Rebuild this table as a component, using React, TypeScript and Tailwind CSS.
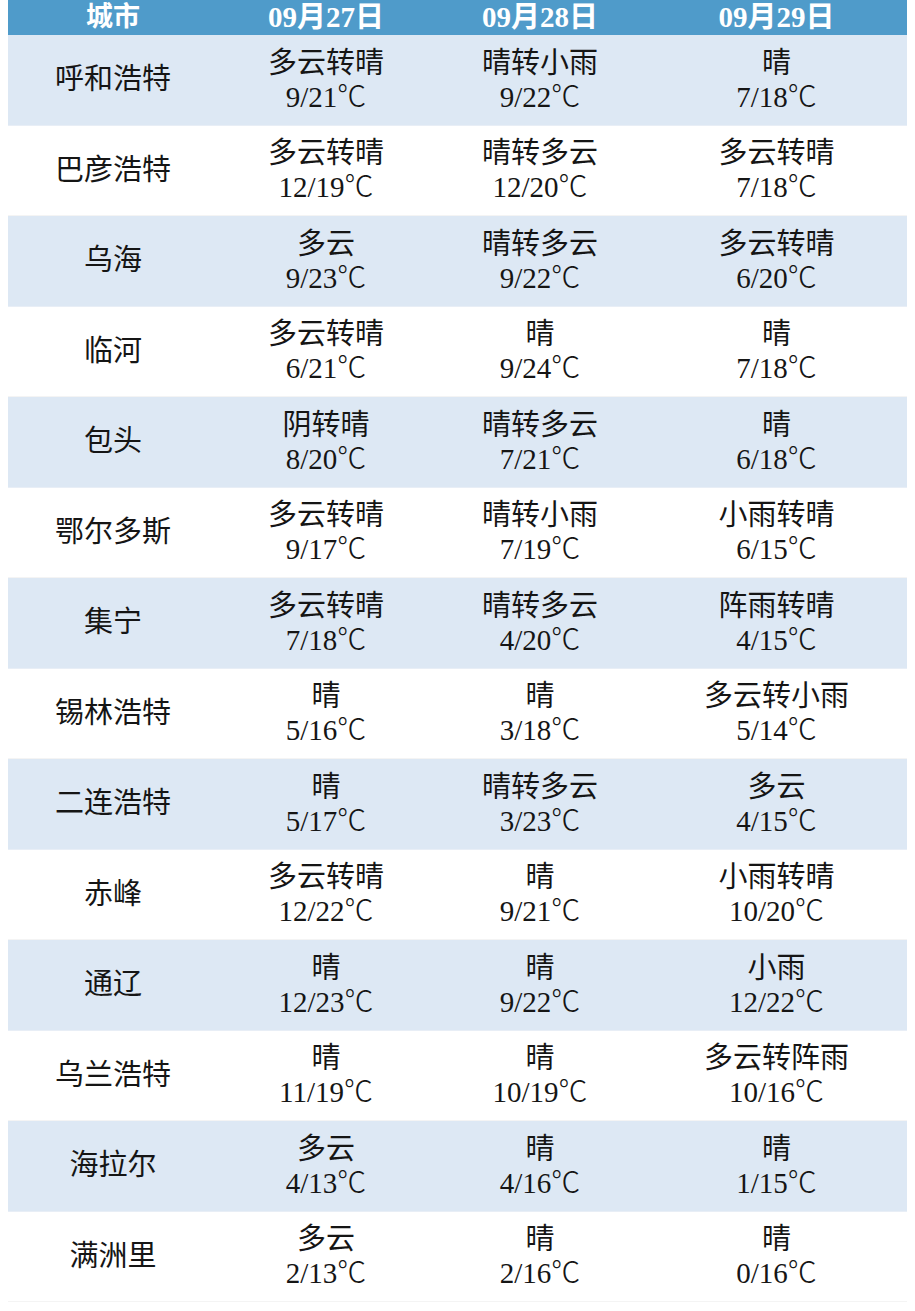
const days = ['09月27日', '09月28日', '09月29日']

type Cell = [string, string]
type Row = { city: string; cells: Cell[] }

const rows: Row[] = [
  { city: '呼和浩特', cells: [['多云转晴', '9/21'], ['晴转小雨', '9/22'], ['晴', '7/18']] },
  { city: '巴彦浩特', cells: [['多云转晴', '12/19'], ['晴转多云', '12/20'], ['多云转晴', '7/18']] },
  { city: '乌海', cells: [['多云', '9/23'], ['晴转多云', '9/22'], ['多云转晴', '6/20']] },
  { city: '临河', cells: [['多云转晴', '6/21'], ['晴', '9/24'], ['晴', '7/18']] },
  { city: '包头', cells: [['阴转晴', '8/20'], ['晴转多云', '7/21'], ['晴', '6/18']] },
  { city: '鄂尔多斯', cells: [['多云转晴', '9/17'], ['晴转小雨', '7/19'], ['小雨转晴', '6/15']] },
  { city: '集宁', cells: [['多云转晴', '7/18'], ['晴转多云', '4/20'], ['阵雨转晴', '4/15']] },
  { city: '锡林浩特', cells: [['晴', '5/16'], ['晴', '3/18'], ['多云转小雨', '5/14']] },
  { city: '二连浩特', cells: [['晴', '5/17'], ['晴转多云', '3/23'], ['多云', '4/15']] },
  { city: '赤峰', cells: [['多云转晴', '12/22'], ['晴', '9/21'], ['小雨转晴', '10/20']] },
  { city: '通辽', cells: [['晴', '12/23'], ['晴', '9/22'], ['小雨', '12/22']] },
  { city: '乌兰浩特', cells: [['晴', '11/19'], ['晴', '10/19'], ['多云转阵雨', '10/16']] },
  { city: '海拉尔', cells: [['多云', '4/13'], ['晴', '4/16'], ['晴', '1/15']] },
  { city: '满洲里', cells: [['多云', '2/13'], ['晴', '2/16'], ['晴', '0/16']] },
]

// column widths measured off the screenshot
const widths = ['w-[210px]', 'w-[216px]', 'w-[212px]', 'w-[261px]']

const serif = "font-['Liberation_Serif','Noto_Sans_CJK_SC',serif]"

export default function App() {
  return (
    <div className="min-h-[1311px] w-[915px] bg-white">
      <div className={`ml-[8px] w-[899px] ${serif}`}>
        <div className="flex h-[35px] items-center bg-[#4f9bca] text-[29px] font-bold leading-none text-white">
          <div className={`${widths[0]} text-center text-[27px]`}>城市</div>
          {days.map((d, i) => (
            <div key={d} className={`${widths[i + 1]} text-center`}>{d}</div>
          ))}
        </div>
        {rows.map((r, idx) => (
          <div
            key={r.city}
            className={`flex h-[90.5px] items-center text-[29px] text-[#151515] ${
              idx % 2 === 0 ? 'bg-[#dde8f4] border-b border-[#e8eef6]' : 'bg-white border-b border-[#f4f4f4]'
            }`}
          >
            <div className={`${widths[0]} text-center leading-none`}>{r.city}</div>
            {r.cells.map((c, i) => (
              <div key={i} className={`${widths[i + 1]} text-center`}>
                <div className="h-[34px] leading-[34px]">{c[0]}</div>
                <div className="h-[34px] leading-[34px]">
                  {c[1]}
                  <span className="font-['Noto_Sans_CJK_SC',sans-serif] font-light leading-none">℃</span>
                </div>
              </div>
            ))}
          </div>
        ))}
      </div>
    </div>
  )
}
